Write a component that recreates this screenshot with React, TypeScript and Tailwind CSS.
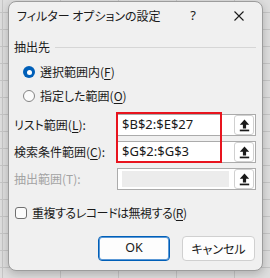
import React from 'react';

const jp = "font-['Noto_Sans_CJK_JP',sans-serif] [font-feature-settings:'palt']";

const RefArrow: React.FC = () => (
  <svg width="11" height="13" viewBox="0 0 11 13">
    <path d="M5.5 0.6 L10.2 5.8 H7.1 V9.4 H3.9 V5.8 H0.8 Z" fill="#1a1a1a" />
    <rect x="0.8" y="10.6" width="9.4" height="1.7" fill="#1a1a1a" />
  </svg>
);

interface RangeFieldProps {
  label: string;
  hotkey: string;
  value?: string;
  disabled?: boolean;
}

const RangeField: React.FC<RangeFieldProps> = ({ label, hotkey, value, disabled }) => (
  <div className="flex h-[22px] items-center">
    <div className={`w-[103px] text-[12px] ${disabled ? 'text-[#a3a3a3]' : 'text-[#1a1a1a]'}`}>
      {label}(
      {disabled ? hotkey : <span className="underline underline-offset-2">{hotkey}</span>}
      ):
    </div>
    <div className="flex h-[22px] w-[139px] items-center border border-[#ababab] bg-white">
      {disabled ? (
        <div className="ml-[4px] h-[16px] w-[107px] bg-[#ececec]" />
      ) : (
        <span className="pl-[4px] font-['Noto_Sans',sans-serif] text-[13px] text-[#1a1a1a]">{value}</span>
      )}
      <button className="ml-auto mr-[1px] flex h-[20px] w-[20px] items-center justify-center rounded-[3px] border border-[#d0d0d0] bg-white">
        <RefArrow />
      </button>
    </div>
  </div>
);

const App: React.FC = () => {
  return (
    <div className="h-[278px] w-[270px] overflow-hidden bg-[#dedede] [background-image:linear-gradient(#c6c6c6_1px,transparent_1px),linear-gradient(90deg,#c6c6c6_1px,transparent_1px)] [background-size:58px_17px] [background-position:2px_12px]">
      <div className={`ml-[8px] mt-[1px] flex h-[270px] w-[255px] flex-col rounded-[8px] border border-[#9c9c9c] bg-[#f0f0f0] shadow-[0_3px_10px_rgba(0,0,0,0.22)] ${jp}`}>
        {/* title bar */}
        <div className="flex h-[28px] items-center pl-[8px] text-[12px] text-[#1a1a1a]">
          <span>フィルター オプションの設定</span>
          <span className="ml-auto mr-[38px] font-['Noto_Sans',sans-serif] text-[13px]">?</span>
          <svg className="mr-[18px]" width="10" height="10" viewBox="0 0 10 10">
            <path d="M0.5 0.5 L9.5 9.5 M9.5 0.5 L0.5 9.5" stroke="#1a1a1a" strokeWidth="1.1" />
          </svg>
        </div>

        <div className="flex flex-col pl-[5px] pr-[6px] pt-[8px]">
          <div className="flex h-[18px] items-center text-[12px] text-[#1a1a1a]">
            <span>抽出先</span>
            <div className="ml-[5px] h-px flex-1 bg-[#d6d6d6]" />
          </div>

          <div className="mt-[4px] flex h-[24px] items-center pl-[9px] text-[12px] text-[#1a1a1a]">
            <div className="flex h-[12px] w-[12px] items-center justify-center rounded-full bg-[#005fb8]">
              <div className="h-[5px] w-[5px] rounded-full bg-white" />
            </div>
            <span className="ml-[5px]">
              選択範囲内(<span className="underline underline-offset-2">F</span>)
            </span>
          </div>
          <div className="flex h-[24px] items-center pl-[9px] text-[12px] text-[#1a1a1a]">
            <div className="h-[12px] w-[12px] rounded-full border border-[#848484] bg-[#fbfbfb]" />
            <span className="ml-[5px]">
              指定した範囲(<span className="underline underline-offset-2">O</span>)
            </span>
          </div>

          <div className="relative mt-[6px] flex flex-col gap-[5px]">
            <RangeField label="リスト範囲" hotkey="L" value="$B$2:$E$27" />
            <RangeField label="検索条件範囲" hotkey="C" value="$G$2:$G$3" />
            <RangeField label="抽出範囲" hotkey="T" disabled />
            <div className="pointer-events-none absolute left-[102px] top-[-2px] h-[51px] w-[106px] border-2 border-[#e8141e]" />
          </div>

          <div className="mt-[13px] flex h-[20px] items-center pl-[1px] text-[12px] text-[#1a1a1a]">
            <div className="h-[12px] w-[12px] rounded-[3px] border border-[#707070] bg-[#fbfbfb]" />
            <span className="ml-[5px] tracking-[-0.04em]">
              重複するレコードは無視する(<span className="underline underline-offset-2">R</span>)
            </span>
          </div>

          <div className="mt-[13px] flex h-[25px] justify-end gap-[12px] pr-[1px] text-[12px] text-[#1a1a1a]">
            <button className="h-[25px] w-[72px] rounded-[4px] border border-[#005fb8] bg-[#fdfdfd] shadow-[inset_0_0_0_1px_#5a98d6] font-['Noto_Sans',sans-serif] text-[12.5px]">
              OK
            </button>
            <button className="h-[25px] w-[73px] rounded-[4px] border border-[#d0d0d0] bg-[#fdfdfd]">
              キャンセル
            </button>
          </div>
        </div>
      </div>
    </div>
  );
};

export default App;
